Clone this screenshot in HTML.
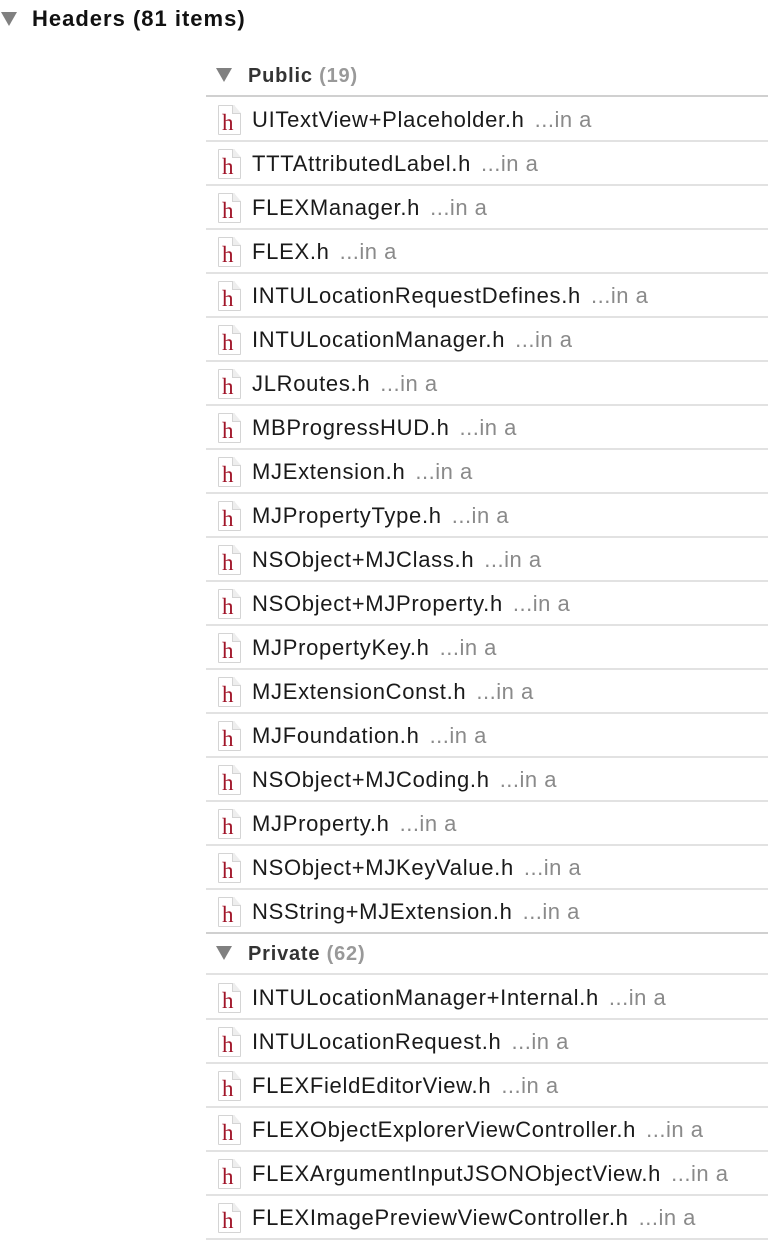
<!DOCTYPE html>
<html><head><meta charset="utf-8"><style>
*{margin:0;padding:0;box-sizing:border-box}
body{width:768px;height:1240px;background:#fff;position:relative;overflow:hidden;font-family:"Liberation Sans",Arial,sans-serif;color:#222}
.tri{position:absolute;width:0;height:0;border-left:8px solid transparent;border-right:8px solid transparent;border-top:14px solid #808080}
.h1{position:absolute;left:32px;top:6px;font-size:22px;font-weight:bold;color:#111;letter-spacing:1px}
.sec{position:absolute;left:248px;font-size:20px;font-weight:bold;color:#333;letter-spacing:0.8px}
.sec span{color:#999}
.line{position:absolute;left:206px;right:0;height:2px;background:#e2e2e2}
.line.s{background:#d0d0d0}
.row{position:absolute;left:206px;right:0;height:44px}
.ic{position:absolute;left:12px;top:8px;width:23px;height:30px;background:#fff;border:1px solid #d4d4d4;border-radius:1px;clip-path:polygon(0 0,70% 0,100% 28%,100% 100%,0 100%)}
.ic:after{content:"";position:absolute;right:-1px;top:-1px;width:8px;height:8px;background:#eee;border-left:1px solid #d4d4d4;border-bottom:1px solid #d4d4d4}
.ic b{position:absolute;left:3px;top:5px;font-family:"Liberation Serif",serif;font-weight:normal;font-size:23px;color:#a01428;line-height:1}
.t{position:absolute;left:46px;top:10px;font-size:22px;color:#1a1a1a;white-space:nowrap;letter-spacing:0.7px}
.t span{color:#8a8a8a;margin-left:10px;letter-spacing:0.5px}
</style></head><body>
<div class="tri" style="left:1px;top:12px"></div>
<div class="h1">Headers (81 items)</div>
<div class="tri" style="left:216px;top:68px"></div>
<div class="sec" style="top:65px">Public <span>(19)</span></div>
<div class="line s" style="top:95px"></div>
<div class="tri" style="left:216px;top:946px"></div>
<div class="sec" style="top:943px">Private <span>(62)</span></div>
<script>
var pub=["UITextView+Placeholder.h","TTTAttributedLabel.h","FLEXManager.h","FLEX.h","INTULocationRequestDefines.h","INTULocationManager.h","JLRoutes.h","MBProgressHUD.h","MJExtension.h","MJPropertyType.h","NSObject+MJClass.h","NSObject+MJProperty.h","MJPropertyKey.h","MJExtensionConst.h","MJFoundation.h","NSObject+MJCoding.h","MJProperty.h","NSObject+MJKeyValue.h","NSString+MJExtension.h"];
var priv=["INTULocationManager+Internal.h","INTULocationRequest.h","FLEXFieldEditorView.h","FLEXObjectExplorerViewController.h","FLEXArgumentInputJSONObjectView.h","FLEXImagePreviewViewController.h"];
var h="";
function add(list,top,last){list.forEach(function(n,i){var y=top+44*i;h+='<div class="row" style="top:'+y+'px"><div class="ic"><b>h</b></div><div class="t">'+n+'<span>...in a</span></div></div>';h+='<div class="line'+(last&&i==list.length-1?' s':'')+'" style="top:'+(y+43)+'px"></div>';});}
add(pub,97,true);
h+='<div class="line" style="top:973px"></div>';
add(priv,975,false);
document.body.insertAdjacentHTML("beforeend",h);
</script>
</body></html>
